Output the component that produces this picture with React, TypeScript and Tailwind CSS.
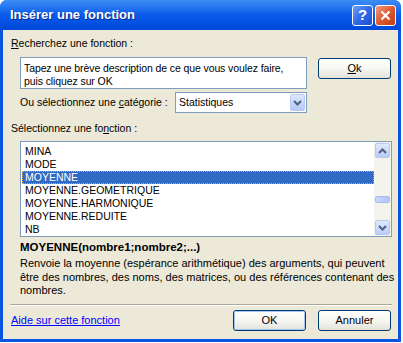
import React from 'react';

const font = { fontFamily: '"Liberation Sans", Arial, sans-serif' };

function Chevron({ dir }: { dir: 'up' | 'down' }) {
    return (
        <svg width="9" height="6" viewBox="0 0 9 6">
            <path
                d={dir === 'up' ? 'M1 5 L4.5 1.5 L8 5' : 'M1 1 L4.5 4.5 L8 1'}
                fill="none"
                stroke="#4D6185"
                strokeWidth="2"
            />
        </svg>
    );
}

function XpButton({ label, underline, isDefault }: { label: string; underline?: boolean; isDefault?: boolean }) {
    return (
        <button className="w-[73px] h-[21px] rounded-[3px] border border-[#003C74] bg-gradient-to-b from-white via-[#F6F6F2] to-[#E3E2DA] text-[11px] text-black flex items-center justify-center">
            <span className={`w-full h-full rounded-[2px] flex items-center justify-center ${isDefault ? 'border border-[#A7C4F0]' : ''}`}>
                {underline ? (
                    <>
                        <span className="underline">{label[0]}</span>
                        {label.slice(1)}
                    </>
                ) : (
                    label
                )}
            </span>
        </button>
    );
}

export default function App() {
    const items = ['MINA', 'MODE', 'MOYENNE', 'MOYENNE.GEOMETRIQUE', 'MOYENNE.HARMONIQUE', 'MOYENNE.REDUITE', 'NB'];

    return (
        <div className="w-[403px] h-[343px] bg-white overflow-hidden" style={font}>
            <div className="w-[401px] h-[342px] rounded-t-[7px] bg-[#0A55E0] flex flex-col">
                {/* title bar */}
                <div className="h-[30px] shrink-0 rounded-t-[7px] bg-gradient-to-b from-[#3D8DF5] via-[#0A5AEB] to-[#0048D8] flex items-center pl-[10px] pr-[5px]">
                    <span className="text-white font-bold text-[13px] [text-shadow:1px_1px_0_#0A2A8A] flex-1">Insérer une fonction</span>
                    <div className="flex gap-[2px]">
                        <div className="w-[21px] h-[21px] rounded-[3px] border border-white bg-gradient-to-br from-[#6E9EF8] via-[#2F6AE8] to-[#1A4FD0] flex items-center justify-center text-white font-bold text-[15px]">?</div>
                        <div className="w-[21px] h-[21px] rounded-[3px] border border-white bg-gradient-to-br from-[#F09A7A] via-[#E05A2E] to-[#C23A12] flex items-center justify-center">
                            <svg width="11" height="11" viewBox="0 0 11 11">
                                <path d="M1.5 1.5 L9.5 9.5 M9.5 1.5 L1.5 9.5" stroke="white" strokeWidth="2.2" />
                            </svg>
                        </div>
                    </div>
                </div>

                {/* body */}
                <div className="flex-1 mx-[3px] mb-[3px] bg-[#ECE9D8] text-[10.5px] text-black flex flex-col pl-[8px] pr-[7px] pt-[7px]">
                    <div className="h-[13px] leading-[13px]">
                        <span className="underline">R</span>echerchez une fonction :
                    </div>

                    <div className="flex mt-[7px] ml-[9px] gap-[11px]">
                        <div className="w-[287px] h-[32px] bg-white border border-[#7F9DB9] px-[3px] pt-[4px] leading-[12.5px] tracking-[-0.1px]">
                            Tapez une brève description de ce que vous voulez faire,<br />puis cliquez sur OK
                        </div>
                        <div className="mt-[1px]">
                            <XpButton label="Ok" underline />
                        </div>
                    </div>

                    <div className="flex items-center justify-between w-[287px] ml-[9px] mt-[3px]">
                        <span>
                            Ou sélectionnez une <span className="underline">c</span>atégorie :
                        </span>
                        <div className="w-[132px] h-[21px] bg-white border border-[#7F9DB9] flex items-center justify-between pl-[3px] pr-[1px]">
                            <span>Statistiques</span>
                            <div className="w-[15px] h-[17px] rounded-[2px] bg-gradient-to-b from-[#DCE7FD] to-[#B4C9F6] border border-[#B9CBF3] flex items-center justify-center">
                                <Chevron dir="down" />
                            </div>
                        </div>
                    </div>

                    <div className="h-[13px] leading-[13px] mt-[9px]">
                        Sélectionnez une fo<span className="underline">n</span>ction :
                    </div>

                    <div className="ml-[9px] mt-[6px] w-[372px] h-[96px] bg-white border border-[#7F9DB9] flex">
                        <div className="flex-1 pt-[3px] pl-[1px]">
                            {items.map((it) => (
                                <div
                                    key={it}
                                    className={`h-[13px] leading-[11px] pl-[2px] ${it === 'MOYENNE' ? 'bg-[#316AC5] text-white border border-dotted border-[#E8A33A]' : 'border border-transparent'}`}
                                >
                                    {it}
                                </div>
                            ))}
                        </div>
                        <div className="w-[17px] bg-[#F5F4EC] flex flex-col items-center py-[1px]">
                            <div className="w-[15px] h-[15px] rounded-[2px] bg-gradient-to-b from-[#E1EAFE] to-[#BACDF7] border border-[#B4C8F2] flex items-center justify-center">
                                <Chevron dir="up" />
                            </div>
                            <div className="flex-1 w-full flex flex-col items-center justify-center">
                                <div className="w-[15px] h-[7px] mt-[20px] rounded-[2px] bg-gradient-to-r from-[#C8D7FC] to-[#B2C6F5] border border-[#A5BDF0]" />
                            </div>
                            <div className="w-[15px] h-[15px] rounded-[2px] bg-gradient-to-b from-[#E1EAFE] to-[#BACDF7] border border-[#B4C8F2] flex items-center justify-center">
                                <Chevron dir="down" />
                            </div>
                        </div>
                    </div>

                    <div className="ml-[9px] mt-[4px] h-[13px] leading-[13px] font-bold text-[11.5px]">
                        MOYENNE(nombre1;nombre2;...)
                    </div>
                    <div className="ml-[9px] mt-[3px] leading-[13.5px] text-[11px] whitespace-nowrap">
                        Renvoie la moyenne (espérance arithmétique) des arguments, qui peuvent<br />
                        être des nombres, des noms, des matrices, ou des références contenant des<br />
                        nombres.
                    </div>

                    <div className="mt-[6px] ml-[-1px] mr-[-1px] border-t border-[#ACA899] border-b border-b-white" />

                    <div className="flex items-center mt-[4px]">
                        <a className="text-[#0000FF] underline flex-1 cursor-pointer text-[11px]">Aide sur cette fonction</a>
                        <div className="flex gap-[12px]">
                            <XpButton label="OK" isDefault />
                            <XpButton label="Annuler" />
                        </div>
                    </div>
                </div>
            </div>
        </div>
    );
}
